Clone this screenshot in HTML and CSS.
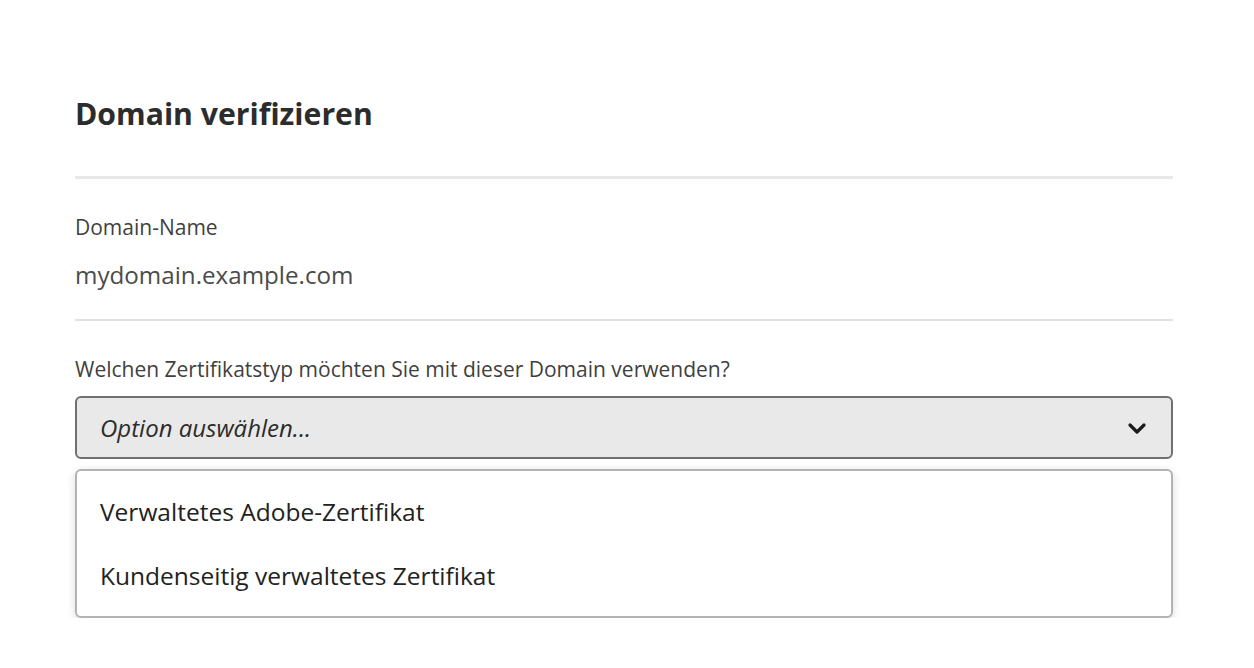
FILE: index.html
```html
<!DOCTYPE html>
<html lang="de">
<head>
<meta charset="utf-8">
<title>Domain verifizieren</title>
<link rel="stylesheet" href="styles.css">
</head>
<body>
<main class="dialog">
  <h1 class="title">Domain verifizieren</h1>
  <hr class="divider-strong">
  <section class="field">
    <div class="label">Domain-Name</div>
    <div class="value">mydomain.example.com</div>
  </section>
  <hr class="divider">
  <section class="field-select">
    <div class="label">Welchen Zertifikatstyp möchten Sie mit dieser Domain verwenden?</div>
    <div class="picker">
      <span class="placeholder">Option auswählen...</span>
      <svg class="chevron" width="20" height="14" viewBox="0 0 20 14" aria-hidden="true">
        <path d="M3 4 L10 11 L17 4" fill="none" stroke="#1b1b1b" stroke-width="3.2" stroke-linecap="round" stroke-linejoin="round"/>
      </svg>
    </div>
    <ul class="menu">
      <li class="menu-item">Verwaltetes Adobe-Zertifikat</li>
      <li class="menu-item">Kundenseitig verwaltetes Zertifikat</li>
    </ul>
  </section>
</main>
</body>
</html>
```

FILE: styles.css
```css
* { box-sizing: border-box; }
html, body {
  margin: 0;
  padding: 0;
  background: #ffffff;
}
body {
  font-family: "Open Sans", "Noto Sans", sans-serif;
  color: #2c2c2c;
}
.dialog {
  padding: 92px 81px 0 75px;
  display: flex;
  flex-direction: column;
}
.title {
  margin: 0;
  font-size: 30.2px;
  font-weight: 700;
  line-height: 44px;
  color: #2c2c2c;
}
.divider-strong {
  margin: 40px 0 0 0;
  border: none;
  height: 3px;
  background: #e8e8e8;
}
.field {
  padding-top: 35px;
}
.label {
  font-size: 21px;
  line-height: 26px;
  color: #3f3f3f;
}
.value {
  margin-top: 20px;
  font-size: 24.2px;
  line-height: 30px;
  color: #4b4b4b;
}
.divider {
  margin: 29px 0 0 0;
  border: none;
  height: 2px;
  background: #e1e1e1;
}
.field-select {
  padding-top: 35px;
}
.picker {
  margin-top: 14px;
  height: 63px;
  background: #e9e9e9;
  border: 2px solid #707070;
  border-radius: 6px;
  display: flex;
  align-items: center;
  justify-content: space-between;
  padding: 0 24px 0 23px;
}
.placeholder {
  font-size: 24px;
  font-style: italic;
  color: #2c2c2c;
}
.chevron {
  display: block;
}
.menu {
  list-style: none;
  margin: 10px 0 0 0;
  padding: 9px 0 8px 0;
  background: #ffffff;
  border: 2px solid #b3b3b3;
  border-radius: 6px;
  box-shadow: 0 2px 8px rgba(0, 0, 0, 0.15);
}
.menu-item {
  font-size: 24.5px;
  line-height: 32px;
  padding: 16px 23px;
  color: #222222;
}
```
